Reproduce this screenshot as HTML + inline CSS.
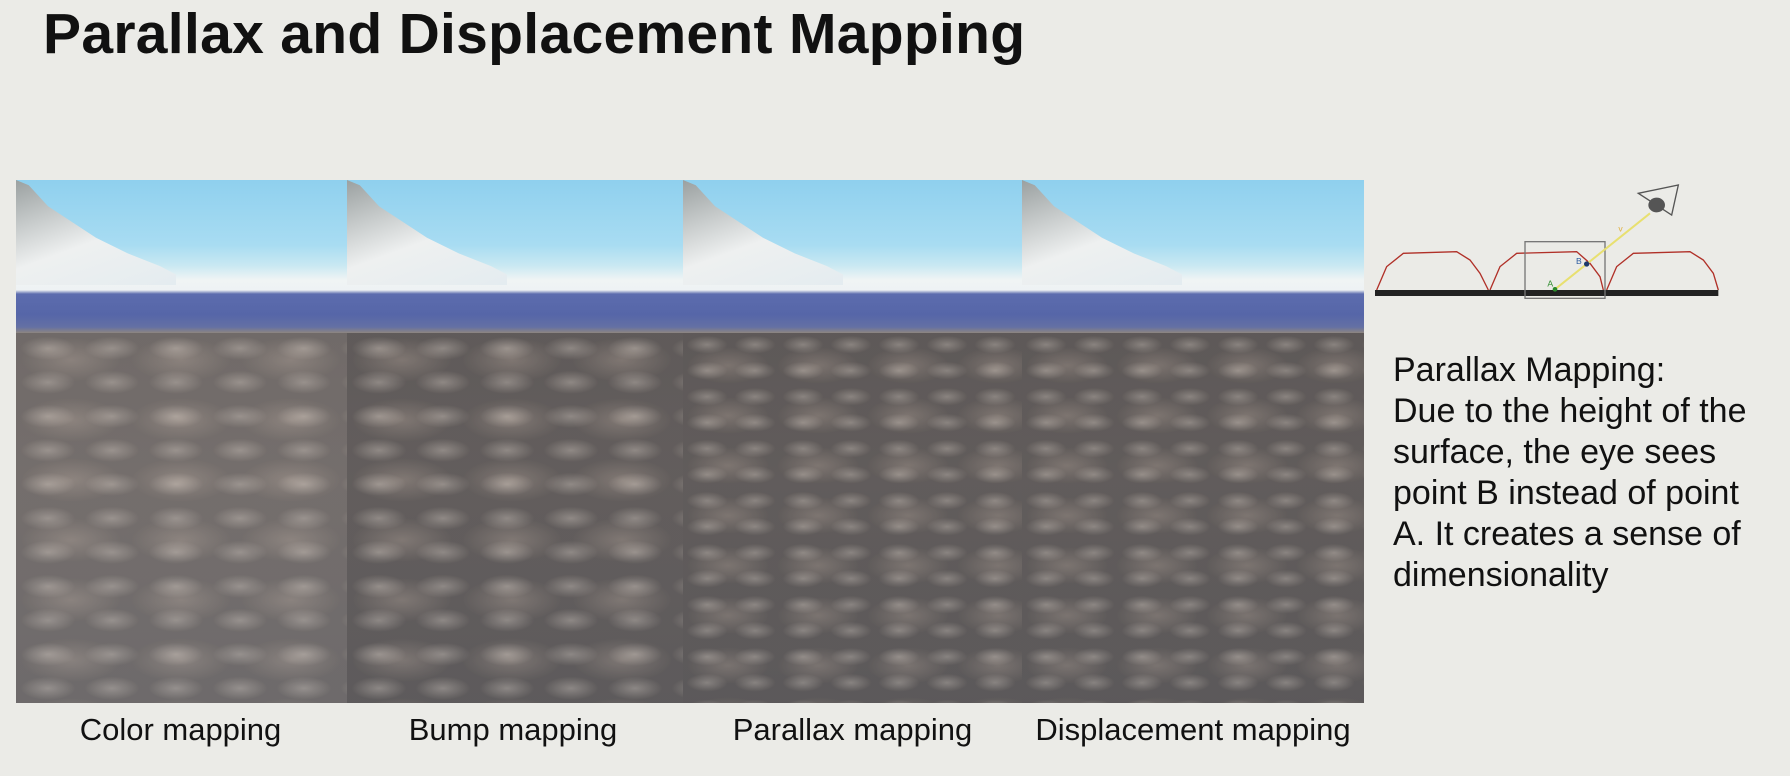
<!DOCTYPE html>
<html><head><meta charset="utf-8"><style>
body{margin:0;width:1790px;height:776px;background:#ebebe7;font-family:"Liberation Sans",sans-serif;position:relative;overflow:hidden}
h1{position:absolute;left:43px;top:1px;margin:0;font-size:57px;font-weight:bold;color:#111;letter-spacing:0.3px}
.p{position:absolute;top:180px;height:523px;overflow:hidden;
background:linear-gradient(#8fd0ee 0,#a8dcf2 65px,#c8e8f2 85px,#f0f4f4 100px,#eef2f4 110px,#5c6cae 114px,#5666a8 135px,#6470a4 147px,#8e8680 153px,#948c86 300px,#8a8684 523px)}
.g{position:absolute;left:0;right:0;top:153px;bottom:0;
background:radial-gradient(ellipse 50% 40% at 50% 45%,rgba(230,220,210,.35),rgba(70,65,65,.3) 85%) 0 0/64px 34px,
radial-gradient(ellipse 50% 40% at 50% 45%,rgba(220,200,190,.3),rgba(50,50,60,.3) 90%) 0 60px/110px 60px}
.m{position:absolute;left:0;top:0;width:160px;height:105px;background:linear-gradient(160deg,#9aa0a0 0,#c8cccc 30%,#eef0f0 55%,#e4ecf0 100%);clip-path:polygon(0 0,8% 5%,20% 25%,35% 40%,50% 55%,70% 70%,90% 82%,100% 90%,100% 100%,0 100%)}
.l{position:absolute;top:712px;font-size:31px;color:#111;text-align:center}
.t{position:absolute;left:1393px;top:350px;font-size:34px;line-height:41px;color:#111}
</style></head><body>
<h1>Parallax and Displacement Mapping</h1>
<div class="p" style="left:16px;width:331px"><div class="m"></div><div class="g" style="opacity:.7"></div></div>
<div class="p" style="left:347px;width:336px"><div class="m"></div><div class="g" style="filter:brightness(.85)"></div></div>
<div class="p" style="left:683px;width:339px"><div class="m"></div><div class="g" style="background-size:48px 26px,90px 50px;filter:brightness(.8)"></div></div>
<div class="p" style="left:1022px;width:342px"><div class="m"></div><div class="g" style="background-size:48px 26px,90px 50px;filter:brightness(.8)"></div></div>
<div class="l" style="left:15px;width:331px">Color mapping</div>
<div class="l" style="left:345px;width:336px">Bump mapping</div>
<div class="l" style="left:683px;width:339px">Parallax mapping</div>
<div class="l" style="left:1022px;width:342px">Displacement mapping</div>
<svg style="position:absolute;left:1350px;top:160px" width="440" height="160" viewBox="0 0 1320 480">
<g fill="none" stroke="#b03028" stroke-width="4">
<path d="M80 390 L110 320 L160 280 L320 275 L360 300 L390 340 L415 390"/>
<path d="M420 390 L450 320 L500 280 L680 275 L720 310 L750 350 L760 390"/>
<path d="M770 390 L800 320 L850 280 L1020 275 L1060 300 L1090 340 L1105 390"/>
</g>
<rect x="75" y="390" width="1030" height="18" fill="#222"/>
<rect x="525" y="245" width="240" height="170" fill="none" stroke="#777" stroke-width="4"/>
<line x1="615" y1="388" x2="900" y2="160" stroke="#e8e070" stroke-width="6"/>
<text x="805" y="215" font-size="26" fill="#e0b040">v</text>
<path d="M865 100 L985 75 L965 165 Z" fill="none" stroke="#555" stroke-width="4"/>
<ellipse cx="920" cy="135" rx="25" ry="22" fill="#555"/>
<circle cx="710" cy="312" r="8" fill="#1c3a6a"/>
<circle cx="615" cy="388" r="7" fill="#2a8a2a"/>
<text x="678" y="312" font-size="26" fill="#2a5aa0">B</text>
<text x="592" y="380" font-size="26" fill="#2a8a2a">A</text>
</svg>
<div class="t">Parallax Mapping:<br>Due to the height of the<br>surface, the eye sees<br>point B instead of point<br>A. It creates a sense of<br>dimensionality</div>
</body></html>
